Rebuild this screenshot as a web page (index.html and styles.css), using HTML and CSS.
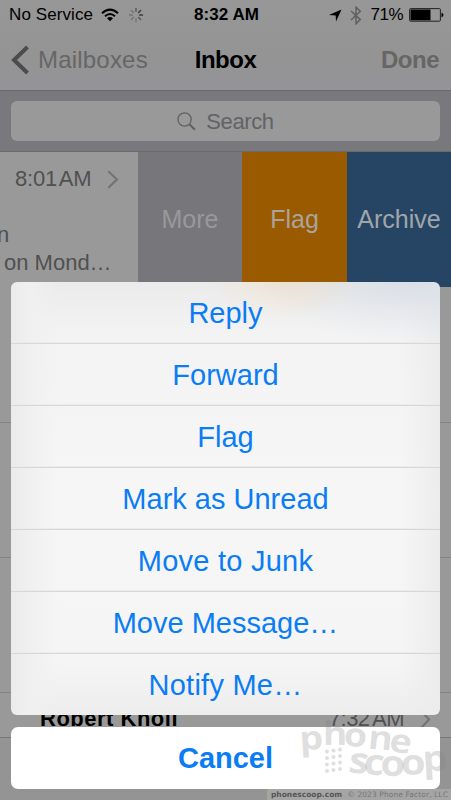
FILE: index.html
```html
<!DOCTYPE html>
<html lang="en">
<head>
<meta charset="utf-8">
<title>Inbox</title>
<link rel="stylesheet" href="styles.css">
</head>
<body>
<div class="screen">
  <header class="top">
    <div class="status">
      <div class="carrier"><span class="service">No Service</span>
        <svg class="wifi" width="18" height="14" viewBox="0 0 18 14"><g fill="none" stroke="#000" stroke-width="2"><path d="M1 5.2Q9-2 17 5.2"/><path d="M4 8.3Q9 3.8 14 8.3"/></g><path d="M6 10.3Q9 7.8 12 10.3L9 13.3Z"/></svg>
        <svg class="spinner" width="16" height="16" viewBox="-8 -8 16 16" stroke-width="1.4" stroke-linecap="round"><path stroke="#393939" d="M3.7 0H6.5M2.6-2.6 4.6-4.6"/><path stroke="#555" d="M0-3.7V-6.5M2.6 2.6 4.6 4.6"/><path stroke="#747474" d="M-2.6-2.6-4.6-4.6M-3.7 0H-6.5M-2.6 2.6-4.6 4.6M0 3.7V6.5"/></svg>
      </div>
      <div class="clock">8:32 AM</div>
      <div class="indicators">
        <svg class="location" width="13" height="13" viewBox="0 0 13 13"><path d="M12.5.5 7 12.5 6.7 6.5 0 6.1Z"/></svg>
        <svg class="bluetooth" width="12" height="19" viewBox="0 0 12 19"><path d="M1 5 10.3 13.6 6 17.7V1.2L10.3 5.3 1 14" fill="none" stroke="#606060" stroke-width="1.5"/></svg>
        <span class="percent">71%</span>
        <svg class="battery" width="35" height="14" viewBox="0 0 35 14"><rect x=".6" y=".6" width="30.8" height="12.6" rx="1" fill="none" stroke="#222" stroke-width="1"/><path d="M1.5 1.5H21.5V12.3H1.5Z"/><path d="M32.5 4.5Q36.5 7 32.5 9.5Z"/></svg>
      </div>
    </div>
    <nav class="nav">
      <div class="back"><svg width="19" height="30" viewBox="0 0 19 30"><path d="M16.5 2 3 15 16.5 28" fill="none" stroke="#4c4c4c" stroke-width="4"/></svg><span class="mailboxes">Mailboxes</span></div>
      <h1 class="title">Inbox</h1>
      <div class="done">Done</div>
    </nav>
  </header>
  <div class="search-bar"><div class="search-field">
    <svg width="19" height="19" viewBox="0 0 19 19" fill="none" stroke="#626265"><circle cx="7.6" cy="7.5" r="6.6" stroke-width="1.3"/><path d="M12.3 12.3 18 17.8" stroke-width="2"/></svg>
    <span class="search-label">Search</span>
  </div></div>
  <div class="swiped">
    <div class="message">
      <div class="meta"><span class="sent">8:01 AM</span><svg width="12" height="19" viewBox="0 0 12 19"><path d="M1.3 1.3 10 9.5 1.3 17.7" fill="none" stroke="#737376" stroke-width="2.1"/></svg></div>
      <div class="preview"><div class="line-one">n</div><div class="line-two">on Mond…</div></div>
    </div>
    <div class="action more"><span>More</span></div>
    <div class="action flag"><span>Flag</span></div>
    <div class="action archive"><span>Archive</span></div>
  </div>
  <div class="list">
    <div class="row"></div><div class="row"></div><div class="row"></div>
    <div class="last"><span class="sender">Robert Knoll</span><span class="last-time">7:32 AM</span><svg width="12" height="19" viewBox="0 0 12 19"><path d="M1.3 1.3 9 9.5 1.3 17.7" fill="none" stroke="#747477" stroke-width="2.2"/></svg></div>
  </div>
  <footer class="toolbar"></footer>

  <div class="sheet">
    <div class="options">
      <div class="option">Reply</div>
      <div class="option">Forward</div>
      <div class="option">Flag</div>
      <div class="option">Mark as Unread</div>
      <div class="option wide">Move to Junk</div>
      <div class="option">Move Message…</div>
      <div class="option wide">Notify Me…</div>
    </div>
    <div class="cancel">Cancel</div>
  </div>
  <svg class="watermark" width="155" height="70" viewBox="0 0 155 70">
    <g fill="#808080" fill-opacity=".25">
      <text transform="scale(1.14 1)" font-size="33" x="3.5 23.5 41.5 62.5 81" y="35 29.5 31 33.5 36.5" rotate="-3 0 3 5 7">phone</text>
      <text transform="scale(1.12 1)" font-size="36" x="46 59.5 75 93.5 113.5" y="57 59 60.5 60 56.5" rotate="7 5 2 0 -3">scoop</text>
      <g><circle cx="31" cy="36.5" r="2"/><circle cx="37.5" cy="35.5" r="2"/><circle cx="44" cy="34.5" r="2"/><circle cx="31" cy="43" r="2"/><circle cx="37.5" cy="42" r="2"/><circle cx="44" cy="41" r="2"/><circle cx="31" cy="49.5" r="2"/><circle cx="37.5" cy="48.5" r="2"/><circle cx="44" cy="47.5" r="2"/><circle cx="31" cy="56" r="2"/><circle cx="37.5" cy="55" r="2"/><circle cx="44" cy="54" r="2"/></g>
    </g>
  </svg>
  <div class="credit"><b>phonescoop.com</b><span>© 2023 Phone Factor, LLC</span></div>
</div>
</body>
</html>
```
FILE: styles.css
```css
* { box-sizing: border-box; }
body { margin: 0; font-family: "Liberation Sans", sans-serif; }
svg { display: block; flex: none; }
span, .title, .done, .clock, .cancel { white-space: nowrap; }
.screen { position: relative; width: 451px; height: 800px; overflow: hidden; background: #999; display: flex; flex-direction: column; }
.top { height: 90px; flex: none; background: linear-gradient(#979797 0, #949494 65%, #949498 100%); }
.status { height: 30px; display: grid; grid-template-columns: 1fr 80px 1fr; padding: 0 7px 0 9px; align-items: center; font-size: 17px; }
.carrier, .indicators { display: flex; align-items: center; }
.service { width: 85px; letter-spacing: .1px; }
.wifi { margin-left: 7px; }
.spinner { margin-left: 9px; }
.clock { font-weight: bold; text-align: center; font-size: 17px; letter-spacing: .05px; }
.indicators { justify-content: flex-end; }
.bluetooth { margin-left: 8px; }
.percent { margin-left: 8px; letter-spacing: -.5px; font-size: 17px; }
.battery { margin-left: 6px; }
.nav { height: 60px; padding: 0 12px 0 11px; display: grid; grid-template-columns: 1fr 70px 1fr; align-items: center; font-size: 24px; color: #666; }
.back { display: flex; align-items: center; gap: 8px; }
.mailboxes { font-size: 24px; letter-spacing: .2px; }
.title { margin: 0; font-size: 24px; color: #000; text-align: center; letter-spacing: -.5px; padding-left: 1px; }
.done { text-align: right; font-weight: bold; letter-spacing: -.5px; }
.search-bar { height: 62px; flex: none; background: #78787d; border-top: 1px solid #6b6b6e; border-bottom: 1px solid #69696d; padding: 10px 11px; }
.search-field { height: 40px; border-radius: 6px; background: #999; display: flex; align-items: center; justify-content: center; gap: 10px; font-size: 22px; color: #626265; }
.search-label { letter-spacing: -.4px; padding-top: 2px; }
.swiped { height: 135px; flex: none; display: grid; grid-template-columns: 138px 104px 105px 104px; }
.message { color: #505050; font-size: 22px; overflow: hidden; }
.meta { display: flex; align-items: center; justify-content: space-between; height: 54px; padding: 0 19px 0 15px; }
.sent { letter-spacing: -.2px; word-spacing: -3px; }
.preview { line-height: 28px; padding: 15px 0 0 4px; }
.line-one { margin-left: -7px; }
.line-two { white-space: nowrap; }
.action { display: flex; align-items: center; justify-content: center; color: #999; font-size: 25px; }
.more { background: #77767b; }
.flag { background: #995a00; color: #aaa49c; }
.archive { background: #264565; color: #a0a5aa; }
.list { height: 450px; flex: none; }
.row { height: 135px; border-bottom: 1px solid #838385; }
.row:first-child { height: 136px; }
.last { display: flex; align-items: center; height: 44px; padding: 8px 19px 0 40px; font-size: 22px; }
.sender { font-weight: bold; letter-spacing: .5px; }
.last-time { margin-left: auto; margin-right: 16px; color: #505050; letter-spacing: -.5px; word-spacing: -2px; }
.toolbar { height: 63px; flex: none; border-top: 1px solid #77777a; background: #949494; }
.sheet { position: absolute; left: 11px; top: 282px; width: 429px; color: #0a7cf5; font-size: 29px; text-align: center; }
.options { height: 433px; border-radius: 6px; overflow: hidden; background: radial-gradient(ellipse 75px 38px at 276px 0, rgba(255,190,105,.18), transparent), radial-gradient(ellipse 150px 60px at 400px 0, rgba(145,175,215,.2), transparent), linear-gradient(90deg, #ebebeb 0, #f0f0f0 4%, transparent 11%, transparent 91%, #ececec 100%), linear-gradient(#ebebeb 0, #f3f3f3 12%, #f6f6f6 48%, #f5f5f5 88%, #ededed 100%); }
.option { height: 62px; border-bottom: 1px solid #d8d8da; box-shadow: inset 0 -1px 0 #ebebed; display: flex; align-items: center; justify-content: center; padding-top: 2px; }
.option:last-child { height: 61px; border: 0; box-shadow: none; }
.wide { letter-spacing: .25px; }
.cancel { height: 62px; margin-top: 12px; border-radius: 7px; background: #fff; font-weight: bold; line-height: 63px; }
.watermark { position: absolute; left: 296px; top: 715px; font-family: "Open Sans", sans-serif; font-weight: 700; }
.credit { position: absolute; left: 267px; top: 789px; width: 184px; height: 11px; border-radius: 3px 0 0; background: #a5a5a5; color: #777; font: 7.5px/11px "DejaVu Sans", sans-serif; display: flex; justify-content: space-between; padding: 0 3px 0 4px; white-space: nowrap; }
.credit b { color: #555; }
.credit span { letter-spacing: .1px; }
```
